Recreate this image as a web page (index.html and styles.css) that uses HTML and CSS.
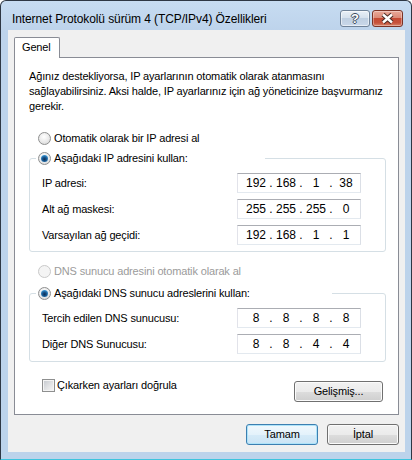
FILE: index.html
```html
<!DOCTYPE html>
<html lang="tr">
<head>
<meta charset="utf-8">
<title>Internet Protokolü sürüm 4 (TCP/IPv4) Özellikleri</title>
<link rel="stylesheet" href="styles.css">
</head>
<body>
<div class="window">
  <div class="titlebar">
    <span class="title">Internet Protokolü sürüm 4 (TCP/IPv4) Özellikleri</span>
    <div class="caption-buttons">
      <div class="cbtn help"><span class="help-glyph">?</span></div>
      <div class="cbtn close">
        <svg width="31" height="17" viewBox="0 0 31 17">
          <path d="M11 4.5 L20 12.5 M20 4.5 L11 12.5" stroke="#4a2a24" stroke-width="4.4" fill="none"/>
          <path d="M11 4.5 L20 12.5 M20 4.5 L11 12.5" stroke="#ffffff" stroke-width="2.4" fill="none"/>
        </svg>
      </div>
    </div>
  </div>

  <div class="client">
    <div class="tabs">
      <div class="tab">Genel</div>
    </div>

    <div class="panel">
      <p class="intro">Ağınız destekliyorsa, IP ayarlarının otomatik olarak atanmasını<br>sağlayabilirsiniz. Aksi halde, IP ayarlarınız için ağ yöneticinize başvurmanız<br>gerekir.</p>

      <div class="option option-first"><span class="radio"></span>Otomatik olarak bir IP adresi al</div>

      <fieldset class="group group-ip">
        <legend class="legend-ip"><span class="option-inline"><span class="radio on"></span>Aşağıdaki IP adresini kullan:</span></legend>
        <div class="field">
          <span>IP adresi:</span>
          <div class="ip"><span class="oct">192</span><span class="dot">.</span><span class="oct">168</span><span class="dot">.</span><span class="oct">1</span><span class="dot">.</span><span class="oct">38</span></div>
        </div>
        <div class="field">
          <span>Alt ağ maskesi:</span>
          <div class="ip"><span class="oct">255</span><span class="dot">.</span><span class="oct">255</span><span class="dot">.</span><span class="oct">255</span><span class="dot">.</span><span class="oct">0</span></div>
        </div>
        <div class="field">
          <span>Varsayılan ağ geçidi:</span>
          <div class="ip"><span class="oct">192</span><span class="dot">.</span><span class="oct">168</span><span class="dot">.</span><span class="oct">1</span><span class="dot">.</span><span class="oct">1</span></div>
        </div>
      </fieldset>

      <div class="option option-disabled"><span class="radio disabled"></span>DNS sunucu adresini otomatik olarak al</div>

      <fieldset class="group group-dns">
        <legend class="legend-dns"><span class="option-inline"><span class="radio on"></span>Aşağıdaki DNS sunucu adreslerini kullan:</span></legend>
        <div class="field">
          <span>Tercih edilen DNS sunucusu:</span>
          <div class="ip"><span class="oct">8</span><span class="dot">.</span><span class="oct">8</span><span class="dot">.</span><span class="oct">8</span><span class="dot">.</span><span class="oct">8</span></div>
        </div>
        <div class="field">
          <span>Diğer DNS Sunucusu:</span>
          <div class="ip"><span class="oct">8</span><span class="dot">.</span><span class="oct">8</span><span class="dot">.</span><span class="oct">4</span><span class="dot">.</span><span class="oct">4</span></div>
        </div>
      </fieldset>

      <div class="bottom-row">
        <div class="check-row"><span class="checkbox"></span>Çıkarken ayarları doğrula</div>
        <div class="btn btn-advanced">Gelişmiş...</div>
      </div>
    </div>

    <div class="dialog-buttons">
      <div class="btn btn-default">Tamam</div>
      <div class="btn">İptal</div>
    </div>
  </div>
</div>
</body>
</html>
```

FILE: styles.css
```css
* {
  box-sizing: border-box;
}

html,
body {
  margin: 0;
  padding: 0;
}

body {
  width: 412px;
  height: 460px;
  overflow: hidden;
  background: #ffffff;
  font: 11px/15px "Liberation Sans", Arial, sans-serif;
  letter-spacing: -0.15px;
  color: #000000;
}

/* window frame */
.window {
  width: 412px;
  height: 460px;
  display: flex;
  flex-direction: column;
  background: linear-gradient(#c7dcf2 0, #bdd3eb 30px, #bcd3eb 100%);
  border: 1px solid #2e3744;
  border-bottom-color: #3ec4dd;
  border-radius: 6px 6px 0 0;
  padding: 0 6px 7px 7px;
}

.titlebar {
  height: 29px;
  flex: none;
  display: flex;
  align-items: flex-start;
  margin: 0 -6px 0 -7px;
  padding: 0 8px 0 11px;
}

.title {
  padding-top: 11px;
  font-size: 12px;
  letter-spacing: -0.1px;
  white-space: nowrap;
}

.caption-buttons {
  margin-left: auto;
  margin-top: 9px;
  display: flex;
  gap: 2px;
}

.cbtn {
  height: 17px;
  border-radius: 3px;
  display: flex;
  align-items: center;
  justify-content: center;
}

.help {
  width: 30px;
  border: 1px solid #6f8298;
  background: linear-gradient(#e9f0f7 0%, #d6e1ed 45%, #bfcfe1 50%, #c9d8ea 100%);
  box-shadow: inset 0 0 0 1px rgba(255, 255, 255, 0.55);
}

.help-glyph {
  font: bold 13px/13px "Liberation Sans", Arial, sans-serif;
  letter-spacing: 0;
  color: #ffffff;
  text-shadow: 1px 0 0 #3e4c5e, -1px 0 0 #3e4c5e, 0 1px 0 #3e4c5e, 0 -1px 0 #3e4c5e;
}

.close {
  width: 31px;
  border: 1px solid #7a3226;
  background: linear-gradient(#eaa99a 0%, #db8a78 45%, #c54a34 50%, #c6513b 78%, #d8836a 100%);
  box-shadow: inset 0 0 0 1px rgba(255, 255, 255, 0.35);
}

.close svg {
  display: block;
  margin: -1px;
}

/* client area */
.client {
  flex: 1;
  background: #f0f0f0;
  padding: 7px 6px 0 6px;
  display: flex;
  flex-direction: column;
}

.tabs {
  height: 20px;
  display: flex;
}

.tab {
  position: relative;
  z-index: 1;
  width: 46px;
  height: 21px;
  background: #ffffff;
  border: 1px solid #898c95;
  border-bottom: none;
  border-radius: 2px 2px 0 0;
  padding: 2px 0 0 7px;
}

.panel {
  width: 385px;
  height: 358px;
  flex: none;
  background: #ffffff;
  border: 1px solid #898c95;
  padding: 11px 12px 0 14px;
  display: flex;
  flex-direction: column;
}

.intro {
  margin: 0;
  white-space: nowrap;
}

.option {
  display: flex;
  align-items: center;
  height: 15px;
  margin-left: 9px;
  white-space: nowrap;
}

.option-first {
  margin-top: 17px;
}

.option-disabled {
  margin-top: 12px;
  color: #9b9b9b;
}

.option-inline {
  display: flex;
  align-items: center;
  height: 15px;
  white-space: nowrap;
}

.radio {
  width: 13px;
  height: 13px;
  flex: none;
  border-radius: 50%;
  border: 1px solid #8e8f8f;
  background: radial-gradient(circle at 45% 35%, #ffffff 0, #e9e9e9 55%, #cfcfcf 100%);
  margin-right: 3px;
}

.radio.on::after {
  content: "";
  display: block;
  width: 7px;
  height: 7px;
  margin: 2px;
  border-radius: 50%;
  background: radial-gradient(circle at 50% 60%, #0c2c52 0, #1a5a92 40%, #3e9bd8 75%, #7fcaf2 100%);
}

.radio.disabled {
  border-color: #c9c9c9;
  background: #f4f4f4;
}

/* group boxes */
.group {
  margin: 5px 0 0;
  padding: 7px 24px 6px 6px;
  border: 1px solid #d5dfe5;
  border-radius: 3px;
  min-inline-size: 0;
}

.group-dns {
  margin-top: 7px;
  padding-bottom: 7px;
}

.group legend {
  padding: 0 0 0 2px;
  height: 15px;
}

.legend-ip {
  width: 229px;
}

.legend-dns {
  width: 296px;
}

.field {
  display: flex;
  align-items: center;
  justify-content: space-between;
  height: 20px;
  margin-left: 6px;
  white-space: nowrap;
}

.field + .field {
  margin-top: 6px;
}

.ip {
  width: 124px;
  height: 20px;
  display: flex;
  align-items: center;
  padding-left: 7px;
  font-size: 12px;
  letter-spacing: 0;
  background: #ffffff;
  border: 1px solid;
  border-color: #abadb3 #dbdfe6 #e3e9ef #e2e3ea;
}

.oct {
  width: 22px;
  text-align: center;
}

.dot {
  width: 8px;
  text-align: center;
}

/* bottom of the tab page */
.bottom-row {
  display: flex;
  justify-content: space-between;
  align-items: flex-start;
  margin-top: 16px;
  padding: 0 3px 0 13px;
}

.check-row {
  display: flex;
  align-items: center;
  height: 15px;
  white-space: nowrap;
}

.checkbox {
  width: 13px;
  height: 13px;
  flex: none;
  border: 1px solid #8e8f8f;
  background: linear-gradient(135deg, #c3c7cd 0%, #e2e3e5 55%, #f7f7f7 100%);
  box-shadow: inset 0 0 0 1px #f4f4f4;
  margin-right: 2px;
}

.btn {
  height: 21px;
  width: 72px;
  display: flex;
  align-items: center;
  justify-content: center;
  border: 1px solid #707070;
  border-radius: 3px;
  background: linear-gradient(#f2f2f2 0%, #ebebeb 50%, #dddddd 51%, #cfcfcf 100%);
  box-shadow: inset 0 0 0 1px #fbfbfb;
  white-space: nowrap;
}

.btn-advanced {
  width: 89px;
  margin-top: 3px;
}

.btn-default {
  border-color: #3c7fb1;
  background: linear-gradient(#f0f8fd 0%, #e4f2fb 50%, #d6ebf8 51%, #cbe4f5 100%);
  box-shadow: inset 0 0 0 1px #aee3f9;
}

.dialog-buttons {
  display: flex;
  justify-content: flex-end;
  gap: 9px;
  margin-top: 9px;
}
```
